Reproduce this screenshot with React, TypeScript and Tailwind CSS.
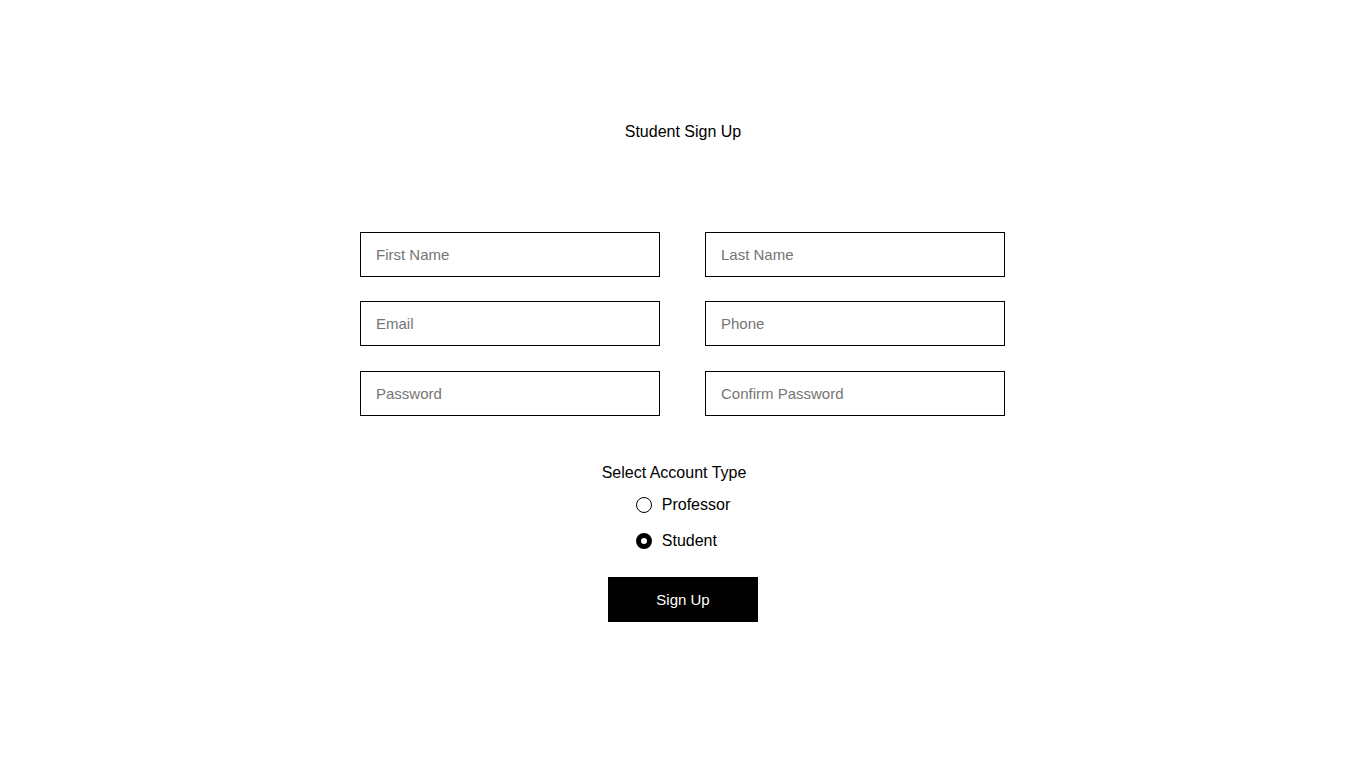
import { useState } from "react";

const FIELDS = [
  ["First Name", "Last Name"],
  ["Email", "Phone"],
  ["Password", "Confirm Password"],
];

export default function App() {
  const [role, setRole] = useState<"professor" | "student">("student");

  return (
    <div className="min-h-screen bg-white text-black flex flex-col items-center pt-[123px] font-['Liberation_Sans',Arial,sans-serif]">
      <h1 className="text-base leading-[18px]">Student Sign Up</h1>

      <div className="mt-[91px] mr-[1px] flex flex-col gap-y-[24px]">
        {FIELDS.map((row, i) => (
          <div key={i} className={`flex gap-x-[45px] ${i === 2 ? "mt-[1px]" : ""}`}>
            {row.map((ph) => (
              <input
                key={ph}
                type={ph.includes("Password") ? "password" : "text"}
                placeholder={ph}
                className="w-[300px] h-[45px] border border-black px-[15px] text-[15px] text-black placeholder:text-[#757575] outline-none"
              />
            ))}
          </div>
        ))}
      </div>

      <p className="mt-[48px] mr-[18px] text-base leading-[18px]">Select Account Type</p>

      <div className="mt-[14px] flex flex-col gap-y-[18px]">
        {(["professor", "student"] as const).map((r) => (
          <label key={r} className="flex items-center gap-x-[10px] cursor-pointer h-[18px]">
            <input
              type="radio"
              name="role"
              className="sr-only"
              checked={role === r}
              onChange={() => setRole(r)}
            />
            {role === r ? (
              <span className="w-4 h-4 rounded-full border-[5px] border-black bg-white" />
            ) : (
              <span className="w-4 h-4 rounded-full border border-black bg-white" />
            )}
            <span className="text-base leading-[18px]">{r === "professor" ? "Professor" : "Student"}</span>
          </label>
        ))}
      </div>

      <button className="mt-[27px] w-[150px] h-[45px] pt-[1px] bg-black text-white text-[15px]">Sign Up</button>
    </div>
  );
}
